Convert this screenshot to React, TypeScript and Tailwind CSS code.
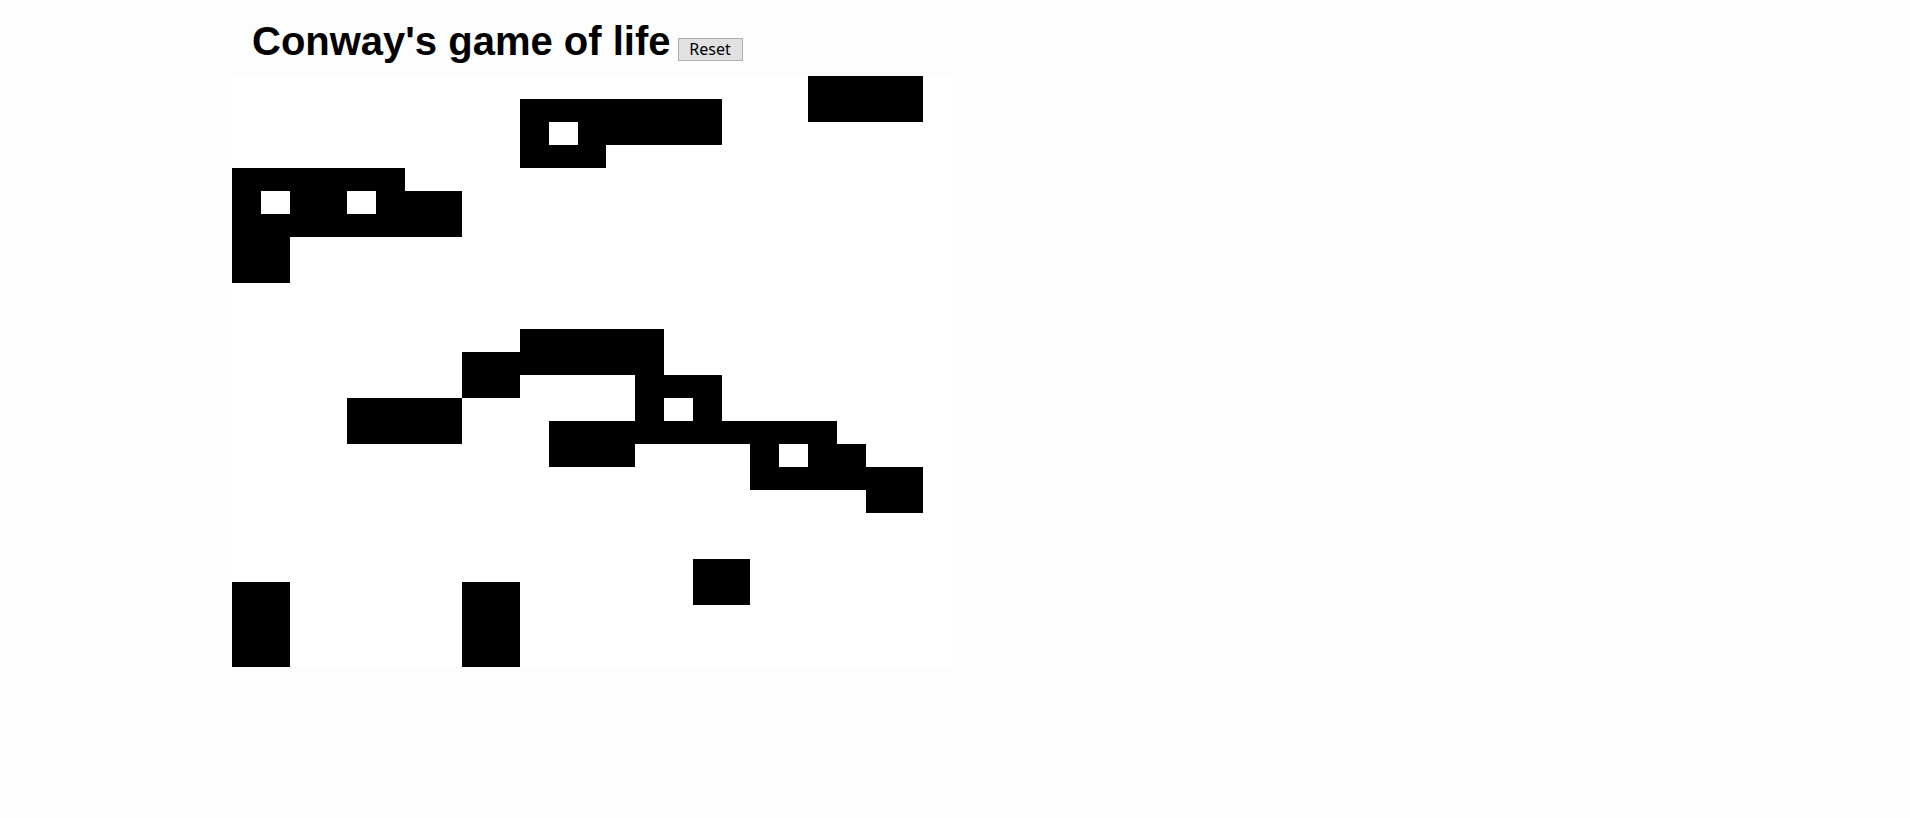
import React from "react";

const ROWS: string[] = [
  "....................####",
  "..........#######...####",
  "..........#.#####",
  "..........###",
  "######",
  "#.##.###",
  "########",
  "##",
  "##",
  "",
  "",
  "..........#####",
  "........#######",
  "........##....###",
  "....####......#.#",
  "....####...##########",
  "...........###....#.##",
  "..................######",
  "......................##",
  "",
  "",
  "................##",
  "##......##......##",
  "##......##",
  "##......##",
  "##......##",
];

const COLS = 25;

const App = () => {
  const cells = ROWS.flatMap((row) => row.padEnd(COLS, ".").split(""));

  return (
    <div className="min-h-screen bg-[#fdfdfd] pl-[232px] pt-[18px]" style={{ fontFamily: '"Liberation Sans", Arial, sans-serif' }}>
      <h1 className="ml-[20px] flex items-baseline gap-[7px] text-[40px] font-bold leading-[46px] text-black">
        <span>Conway's game of life</span>
        <button className="h-[23px] w-[65px] border border-[#adadad] bg-[#e1e1e1] text-[16px] font-normal leading-[21px] text-black font-['Noto_Sans',sans-serif]">
          Reset
        </button>
      </h1>

      {/* board */}
      <div className="mt-[12px] grid h-[591px] w-[720px] grid-cols-[repeat(25,28.8px)] auto-rows-[23px] overflow-hidden bg-white">
        {cells.map((c, i) => (
          <div key={i} className={c === "#" ? "bg-black" : "bg-white"} />
        ))}
      </div>
    </div>
  );
};

export default App;
